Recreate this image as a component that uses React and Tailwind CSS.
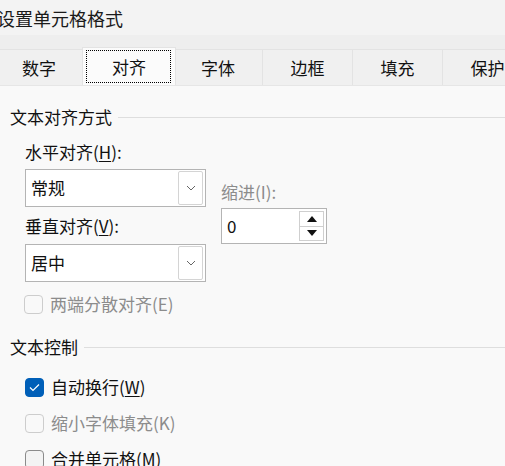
import React from 'react'

const font = { fontFamily: '"Noto Sans CJK SC", "Noto Sans", sans-serif' }

function Tab({ label, width, selected }) {
  if (selected) {
    return (
      <div className={`relative -mx-[2px] h-[38px] ${width} shrink-0 bg-[#fbfbfb] border border-b-0 border-[#e3e3e3] flex items-center justify-center z-10`}>
        <div className="absolute left-[3px] right-[4px] top-[2px] bottom-[2px] border border-dotted border-black" />
        <span className="text-[17px] text-[#111] mt-[1px]">{label}</span>
      </div>
    )
  }
  return (
    <div className={`h-[36px] ${width} shrink-0 bg-[#f0f0f0] border border-b-0 border-[#e3e3e3] -ml-px flex items-center justify-center`}>
      <span className="text-[17px] text-[#111]">{label}</span>
    </div>
  )
}

function Combo({ value }) {
  return (
    <div className="h-[38px] w-[181px] bg-white border border-[#b4b4b4] flex items-center justify-between pl-[5px] pr-[2px]">
      <span className="text-[17px] text-[#111]">{value}</span>
      <div className="h-[34px] w-[25px] border border-[#d4d4d4] rounded-[2px] flex items-center justify-center">
        <svg width="10" height="6" viewBox="0 0 10 6">
          <path d="M1 1 L5 5 L9 1" fill="none" stroke="#666" strokeWidth="1" />
        </svg>
      </div>
    </div>
  )
}

function Check({ label, state, disabled }) {
  let box = 'border border-[#cdcdcd] bg-transparent'
  if (state === 'checked') box = 'bg-[#005fb8] border border-[#005fb8]'
  if (state === 'empty') box = 'border border-[#8b8b8b] bg-[#f3f3f3]'
  return (
    <div className="flex items-center gap-[7px] h-[24px]">
      <div className={`w-[19px] h-[19px] rounded-[4px] ${box} flex items-center justify-center`}>
        {state === 'checked' && (
          <svg width="11" height="9" viewBox="0 0 11 9">
            <path d="M1 4.5 L4 7.5 L10 1.5" fill="none" stroke="white" strokeWidth="1.2" />
          </svg>
        )}
      </div>
      <span className={`text-[17px] ${disabled ? 'text-[#8c8c8c]' : 'text-[#111]'}`}>{label}</span>
    </div>
  )
}

function Heading({ label }) {
  return (
    <div className="flex items-center h-[24px]">
      <span className="text-[17px] text-[#111] pr-[6px]">{label}</span>
      <div className="flex-1 h-px bg-[#dedede]" />
    </div>
  )
}

export default function App() {
  const u = (t) => <span className="underline underline-offset-[2px]">{t}</span>
  return (
    <div className="w-[505px] h-[466px] overflow-hidden bg-[#f9f9f9] leading-[24px]" style={font}>
      <div className="h-[35px] bg-[#f3f3f3] flex items-center">
        <span className="-ml-[3px] text-[18px] text-[#1a1a1a]">设置单元格格式</span>
      </div>
      <div className="h-[51px] bg-[#eeeeee] flex items-end border-b border-[#e6e6e6] overflow-hidden">
        <div className="flex items-end -ml-[5px]">
          <Tab label="数字" width="w-[90px]" />
          <Tab label="对齐" width="w-[94px]" selected />
          <Tab label="字体" width="w-[90px]" />
          <Tab label="边框" width="w-[91px]" />
          <Tab label="填充" width="w-[91px]" />
          <Tab label="保护" width="w-[91px]" />
        </div>
      </div>
      <div className="pl-[10px] pt-[19px]">
        <Heading label="文本对齐方式" />
        <div className="flex gap-[15px] pl-[15px] mt-[11px]">
          <div className="flex flex-col">
            <span className="text-[17px] text-[#111]">水平对齐({u('H')}):</span>
            <div className="mt-[5px]"><Combo value="常规" /></div>
            <span className="text-[17px] text-[#111] mt-[7px]">垂直对齐({u('V')}):</span>
            <div className="mt-[6px]"><Combo value="居中" /></div>
            <div className="mt-[10px] -ml-[1px]">
              <Check label="两端分散对齐(E)" disabled />
            </div>
          </div>
          <div className="flex flex-col mt-[40px]">
            <span className="text-[17px] text-[#8c8c8c]">缩进(I):</span>
            <div className="mt-[4px] h-[36px] w-[106px] bg-white border border-[#b4b4b4] flex items-center justify-between pl-[5px] pr-[2px]">
              <span className="text-[17px] text-[#111]">0</span>
              <div className="w-[25px] h-[30px] flex flex-col border border-[#cfcfcf]">
                <div className="flex-1 flex items-center justify-center border-b border-[#cfcfcf]">
                  <svg width="10" height="6" viewBox="0 0 10 6"><path d="M0 6 L5 0 L10 6 Z" fill="#111" /></svg>
                </div>
                <div className="flex-1 flex items-center justify-center">
                  <svg width="10" height="6" viewBox="0 0 10 6"><path d="M0 0 L5 6 L10 0 Z" fill="#111" /></svg>
                </div>
              </div>
            </div>
          </div>
        </div>
        <div className="mt-[19px]">
          <Heading label="文本控制" />
        </div>
        <div className="pl-[15px] mt-[16px] flex flex-col gap-[12px]">
          <Check label={<>自动换行({u('W')})</>} state="checked" />
          <Check label="缩小字体填充(K)" disabled />
          <Check label="合并单元格(M)" state="empty" />
        </div>
      </div>
    </div>
  )
}
